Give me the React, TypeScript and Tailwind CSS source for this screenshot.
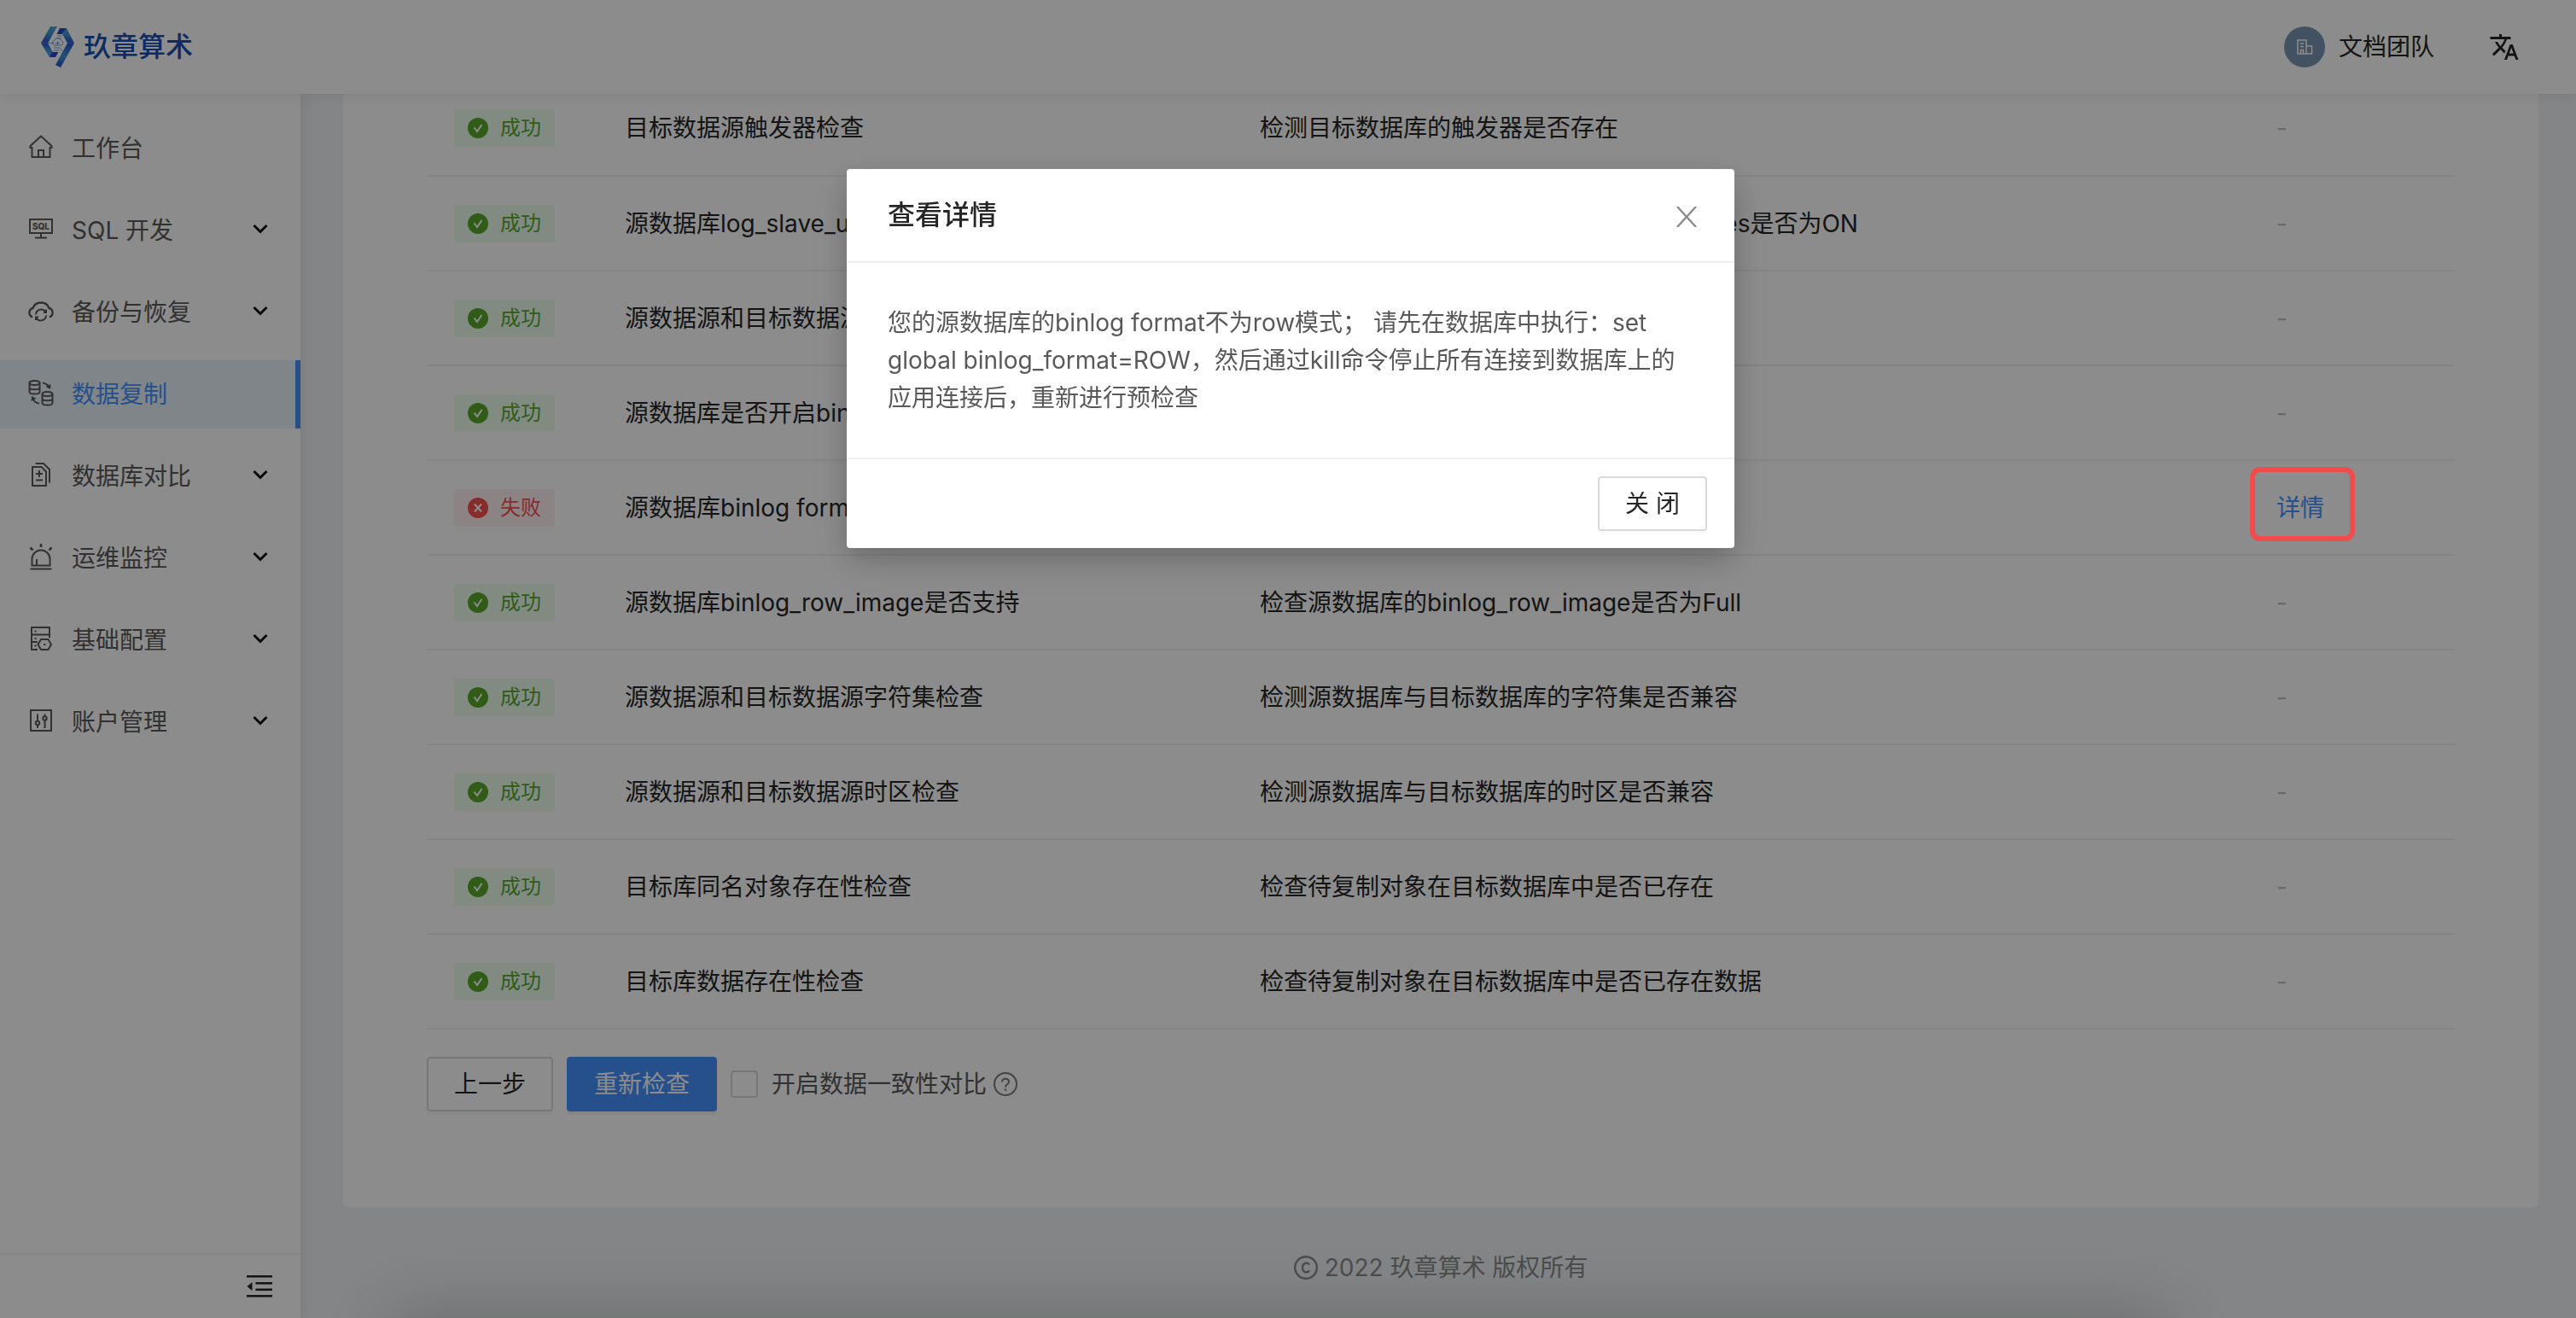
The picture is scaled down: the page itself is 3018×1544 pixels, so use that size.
import React from 'react';
import { MdTranslate } from 'react-icons/md';

const chevron = (
  <svg viewBox="0 0 18 12" className="mb-1 h-3 w-[18px]" fill="none" stroke="#111" strokeWidth="3">
    <path d="M1.500 2l7.500 7.500L16.500 2" />
  </svg>
);

function MenuIcon({ name }: { name: string }) {
  return (
    <svg viewBox="0 0 32 32" className="mb-1 h-8 w-8 shrink-0" fill="none" stroke="#595959" strokeWidth="2">
      {name === 'home' && <path d="M5.500 17H3.500v-2L16 3.500 28.500 15v2h-2v11h-21zM13 28v-8h6v8" />}
      {name === 'sql' && (
        <>
          <path d="M3 5h26v16H3zM16 21v5M9 26.500h14" />
          <text x="16" y="16.500" fontSize="10" fontWeight="800" textAnchor="middle" fill="#595959" stroke="none" fontFamily="Inter, sans-serif">
            SQL
          </text>
        </>
      )}
      {name === 'cloud' && (
        <>
          <path d="M6 23.500a5.500 5.500 0 0 1 .5-10.500a10 9.500 0 0 1 19 0a5.500 5.500 0 0 1 .5 10.500" strokeWidth="2.400" />
          <path d="M10 20.500a6.200 6.200 0 0 1 11.500-3M22 21.500a6.200 6.200 0 0 1-11.500 3M22 14.500v3.500h-3M10 27v-3.500h3" />
        </>
      )}
      {name === 'copy' && (
        <>
          <ellipse cx="8.500" cy="4.500" rx="6" ry="2.600" />
          <path d="M2.500 4.500v10.500c0 1.500 2.500 2.600 6 2.600s6-1.100 6-2.600V4.500M2.500 9.700c0 1.500 2.500 2.600 6 2.600s6-1.100 6-2.600" />
          <ellipse cx="23.500" cy="17.500" rx="6" ry="2.600" />
          <path d="M17.500 17.500V28c0 1.500 2.500 2.600 6 2.600s6-1.100 6-2.600V17.500M17.500 22.700c0 1.500 2.500 2.600 6 2.600s6-1.100 6-2.600" />
          <path d="M18 4.500c3.500.5 6 2.500 7.500 5M14 28.500c-4-.5-7-3-8-6" />
          <path d="M27.500 6l-.5 6-5.500-3zM4.500 26l.5-6 5.500 3z" fill="#595959" stroke="none" />
        </>
      )}
      {name === 'compare' && (
        <>
          <path d="M6 7h10.500l5.500 5.500V29H6z" />
          <path d="M9.500 3h9.500l7 7v15.500M14 11v8M10 15h8M10 22.500h8" />
        </>
      )}
      {name === 'alarm' && (
        <>
          <path d="M5.500 26.500V19a10.500 10.500 0 0 1 21 0v7.500zM3.500 30.500h25M11 26v-7" />
          <path d="M16 1v4M3.500 5.500l3 3M28.500 5.500l-3 3" strokeWidth="2.600" />
        </>
      )}
      {name === 'config' && (
        <>
          <path d="M12 29H5V3h21v12M5 11.500h21M5 20h7" />
          <path d="M16 17h8.500l3.500 6-3.500 6H16l-3.500-6z" />
          <path d="M8.500 7.500h2M8.500 16h2M8.500 24.500h2M19.200 23h2.200" strokeWidth="2.200" />
        </>
      )}
      {name === 'account' && (
        <>
          <path d="M4 4h24v24H4zM12 8.500V17M12 21v4M20.500 8.500V11M20.500 15v10" />
          <circle cx="12" cy="19" r="2.200" />
          <circle cx="20.500" cy="13.500" r="2.200" />
        </>
      )}
    </svg>
  );
}

const menu = [
  { icon: 'home', label: '工作台', sub: false },
  { icon: 'sql', label: 'SQL 开发', sub: true },
  { icon: 'cloud', label: '备份与恢复', sub: true },
  { icon: 'copy', label: '数据复制', sub: false, active: true },
  { icon: 'compare', label: '数据库对比', sub: true },
  { icon: 'alarm', label: '运维监控', sub: true },
  { icon: 'config', label: '基础配置', sub: true },
  { icon: 'account', label: '账户管理', sub: true },
];

const rows = [
  { ok: true, name: '目标数据源触发器检查', desc: '检测目标数据库的触发器是否存在' },
  { ok: true, name: '源数据库log_slave_updates检查', desc: '检查源数据库的binlog参数log_slave_updates是否为ON' },
  { ok: true, name: '源数据源和目标数据源版本检查', desc: '检测源数据库与目标数据库的版本' },
  { ok: true, name: '源数据库是否开启binlog', desc: '检查源数据库是否开启binlog' },
  { ok: false, name: '源数据库binlog format检查', desc: '检查源数据库binlog format' },
  { ok: true, name: '源数据库binlog_row_image是否支持', desc: '检查源数据库的binlog_row_image是否为Full' },
  { ok: true, name: '源数据源和目标数据源字符集检查', desc: '检测源数据库与目标数据库的字符集是否兼容' },
  { ok: true, name: '源数据源和目标数据源时区检查', desc: '检测源数据库与目标数据库的时区是否兼容' },
  { ok: true, name: '目标库同名对象存在性检查', desc: '检查待复制对象在目标数据库中是否已存在' },
  { ok: true, name: '目标库数据存在性检查', desc: '检查待复制对象在目标数据库中是否已存在数据' },
];

function Logo() {
  return (
    <svg viewBox="0 0 40 48" className="h-12 w-10">
      <defs>
        <linearGradient id="lg-a" x1="0" y1="0" x2="0" y2="1">
          <stop offset="0" stopColor="#46a6dc" />
          <stop offset="0.500" stopColor="#3f8fd0" />
          <stop offset="1" stopColor="#2b50d8" />
        </linearGradient>
        <linearGradient id="lg-b" x1="0" y1="0" x2="0" y2="1">
          <stop offset="0" stopColor="#2a50d2" />
          <stop offset="0.500" stopColor="#3f97d4" />
          <stop offset="1" stopColor="#4fa6e4" />
        </linearGradient>
        <linearGradient id="lg-c" x1="0" y1="0" x2="0" y2="1">
          <stop offset="0" stopColor="#2a50d2" />
          <stop offset="0.550" stopColor="#3f97d4" />
          <stop offset="1" stopColor="#2847c4" />
        </linearGradient>
      </defs>
      <path d="M11 0h8L8 19.500H0z" fill="url(#lg-a)" />
      <path d="M0 19.500h8L17 36h-7z" fill="url(#lg-b)" />
      <path d="M13 30h7.500L17 36h-7z" fill="#2847c4" />
      <path d="M22 2h8l-4 7h-7.500z" fill="#2847c4" />
      <path d="M30 2l9 17.500h-8L24.500 8z" fill="url(#lg-a)" />
      <path d="M31 19.500h8L23 48l-6-3z" fill="url(#lg-c)" />
      <g stroke="#6f9fe0" strokeWidth="1" fill="none">
        <path d="M8 19.500h7M19 11h6M18 14h6M15 25h7M15 28h6M22 25l3 4" />
        <path d="M15.500 22a3 3 0 0 1 0-5.500a4.500 4.500 0 0 1 8.500 0a3 3 0 0 1 0 5.500zM17 19.500h5M19.500 17v5" />
      </g>
    </svg>
  );
}

function StatusTag({ ok }: { ok: boolean }) {
  return (
    <span
      className={
        ok
          ? 'inline-flex h-11 items-center gap-3.5 rounded bg-[#ebfdec] px-4 text-2xl text-[#58a82c]'
          : 'inline-flex h-11 items-center gap-3.5 rounded bg-[#fff1f0] px-4 text-2xl text-[#f5504e]'
      }
    >
      <svg viewBox="0 0 24 24" className="h-6 w-6 shrink-0">
        <circle cx="12" cy="12" r="12" fill="currentColor" />
        <path d={ok ? 'M7.500 11.500l3.500 4.500 5.500-8' : 'M8 7.500l8 9M16 7.500l-8 9'} fill="none" stroke="#fff" strokeWidth="2" />
      </svg>
      {ok ? '成功' : '失败'}
    </span>
  );
}

export default function App() {
  return (
    <div className="flex h-screen flex-col overflow-hidden bg-[#f0f2f5] font-[Inter,'Noto_Sans_CJK_SC',sans-serif] text-[28px] leading-[44px] text-[#262626]">
      <header className="z-20 flex h-[110px] shrink-0 items-center justify-between bg-white pr-[66px] pl-12 shadow-[0_2px_16px_rgba(0,0,0,0.08)]">
        <a href="#" className="flex items-center gap-2.5 text-[32px] font-medium text-[#1c4fb4]">
          <Logo />
          玖章算术
        </a>
        <div className="flex items-center gap-16">
          <button className="flex items-center gap-4">
            <span className="flex h-12 w-12 items-center justify-center rounded-full bg-[#7b95b4]">
              <svg viewBox="0 0 20 20" className="h-5 w-5" fill="none" stroke="#fff" strokeWidth="1.500">
                <path d="M2 2h10v16H2zM12 9h6.500v9H12M5 6h4M5 9.500h4M5.500 18v-4.500h3V18" />
              </svg>
            </span>
            文档团队
          </button>
          <button aria-label="切换语言">
            <MdTranslate className="h-9 w-9" />
          </button>
        </div>
      </header>

      <div className="flex min-h-0 flex-1">
        <aside className="z-10 flex w-[352px] shrink-0 flex-col bg-white shadow-[2px_0_16px_rgba(0,0,0,0.08)]">
          <nav className="flex flex-1 flex-col gap-4 pt-6 text-[#595959]">
            {menu.map((m) => (
              <a
                key={m.label}
                href="#"
                className={
                  m.active
                    ? 'flex h-20 items-center border-r-6 border-[#4592ff] bg-[#e8f3fa] pl-8 text-[#4592ff]'
                    : 'flex h-20 items-center pr-[38px] pl-8'
                }
              >
                <MenuIcon name={m.icon} />
                <span className="ml-5 flex-1">{m.label}</span>
                {m.sub && chevron}
              </a>
            ))}
          </nav>
          <div className="flex h-[76px] items-center justify-end border-t-2 border-[#f0f0f0] pr-8">
            <button aria-label="收起菜单">
              <svg viewBox="0 0 32 28" className="h-7 w-8" fill="#262626">
                <path d="M1 1h30v2.500H1zM11.500 9h19.500v2.500H11.500zM11.500 16.500h19.500V19H11.500zM1 24h30v2.500H1zM1.500 14l6-5v10z" />
              </svg>
            </button>
          </div>
        </aside>

        <main className="flex min-w-0 flex-1 flex-col justify-end overflow-hidden pr-11 pl-[50px]">
          <section className="shrink-0 rounded bg-white px-[98px] pt-8 pb-28">
            <table className="w-full table-fixed border-collapse text-left">
              <colgroup>
                <col className="w-[200px]" />
                <col className="w-[744px]" />
                <col />
                <col className="w-[241px]" />
              </colgroup>
              <tbody>
                {rows.map((r) => (
                  <tr key={r.name} className="h-[111px] border-b-2 border-[#f0f0f0]">
                    <td className="px-8">
                      <div className="flex">
                        <StatusTag ok={r.ok} />
                      </div>
                    </td>
                    <td className="px-8">{r.name}</td>
                    <td className="px-8">{r.desc}</td>
                    <td className="px-8 text-[#bfbfbf]">
                      {r.ok ? '-' : <a href="#" className="text-[#4592ff]">详情</a>}
                    </td>
                  </tr>
                ))}
              </tbody>
            </table>
            <div className="mt-8 flex items-center gap-4">
              <button className="h-16 rounded border-2 border-[#d9d9d9] px-[30px] shadow-[0_4px_0_rgba(0,0,0,0.02)]">上一步</button>
              <button className="h-16 rounded bg-[#4592ff] px-8 text-white shadow-[0_4px_0_rgba(0,0,0,0.05)]">重新检查</button>
              <label className="flex items-center text-[#595959]">
                <input type="checkbox" className="mr-4 h-8 w-8 appearance-none rounded border-2 border-[#d9d9d9] bg-white" />
                开启数据一致性对比
                <svg viewBox="0 0 28 28" className="ml-2 h-7 w-7" fill="none" stroke="#7a7a7a" strokeWidth="2">
                  <circle cx="14" cy="14" r="13" />
                  <path d="M10 11.500c0-5 8-5 8 0 0 3-4 2.500-4 6M14 19.500v2.200" />
                </svg>
              </label>
            </div>
          </section>
          <footer className="flex h-[130px] shrink-0 items-center justify-center gap-2 pt-3 text-[#8c8c8c]">
            <svg viewBox="0 0 28 28" className="h-7 w-7" fill="none" stroke="currentColor" strokeWidth="2.400">
              <circle cx="14" cy="14" r="12.800" />
              <path d="M18 10.500c-2.500-3.500-8-2-8 3.500s5.500 7 8 3.500" />
            </svg>
            <span>2022 玖章算术 版权所有</span>
          </footer>
        </main>
      </div>

      <div className="fixed inset-0 z-30 flex items-start justify-center bg-black/45 pt-[198px]">
        <div
          role="dialog"
          aria-labelledby="dialog-title"
          className="ml-1.5 w-[1040px] rounded bg-white shadow-[0_12px_32px_rgba(0,0,0,0.16),0_18px_56px_rgba(0,0,0,0.10)]"
        >
          <div className="flex h-[110px] items-center justify-between border-b-2 border-[#f0f0f0] pr-11 pl-12">
            <h2 id="dialog-title" className="text-[32px] font-medium">查看详情</h2>
            <button aria-label="关闭对话框" className="pt-1">
              <svg viewBox="0 0 24 24" className="h-6 w-6" fill="none" stroke="#8c8c8c" strokeWidth="2.400">
                <path d="M1 0l22 24M23 0L1 24" />
              </svg>
            </button>
          </div>
          <p className="p-12 text-[#595959]">
            您的源数据库的binlog format不为row模式； 请先在数据库中执行：set global binlog_format=ROW，然后通过kill命令停止所有连接到数据库上的应用连接后，重新进行预检查
          </p>
          <div className="flex justify-end border-t-2 border-[#f0f0f0] px-8 py-5">
            <button className="h-16 rounded border-2 border-[#d9d9d9] px-[30px] shadow-[0_4px_0_rgba(0,0,0,0.02)]">关 闭</button>
          </div>
        </div>
      </div>

      <div className="pointer-events-none fixed top-[547px] right-[259px] z-40 h-[87px] w-[123px] rounded-xl border-6 border-[#f04c4c]" />
      <div className="pointer-events-none fixed right-[480px] -bottom-20 left-[460px] z-40 h-20 shadow-[0_0_80px_rgba(0,0,0,0.22)]" />
    </div>
  );
}
